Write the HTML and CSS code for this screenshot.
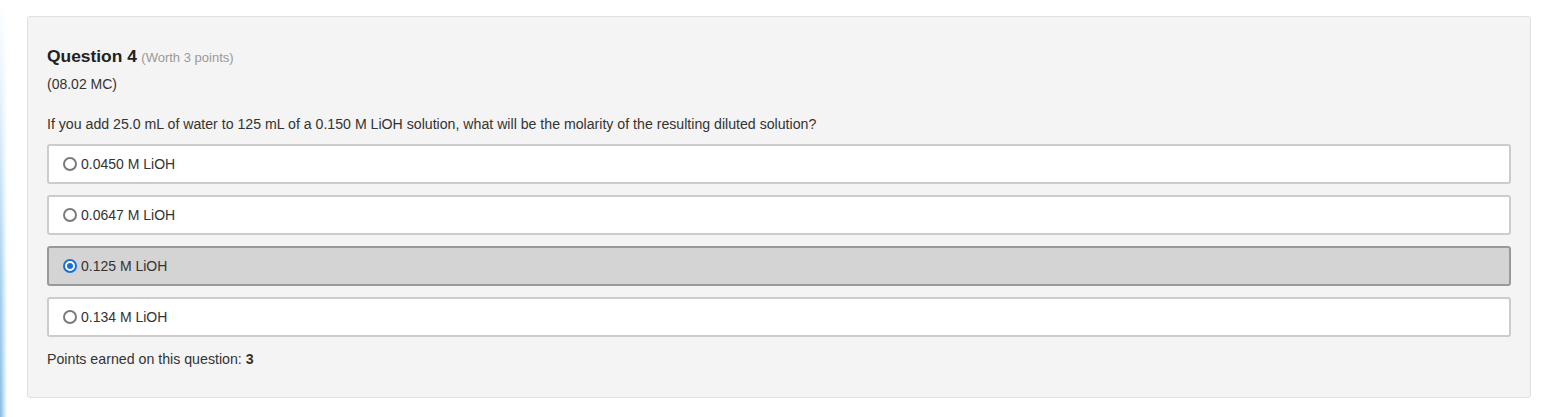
FILE: index.html
```html
<!DOCTYPE html>
<html>
<head>
<meta charset="utf-8">
<link rel="stylesheet" href="styles.css">
</head>
<body>
<div class="page">
  <div class="strip"></div>
  <div class="panel">
    <div class="title"><span class="qnum">Question 4</span> <span class="worth">(Worth 3 points)</span></div>
    <div class="code">(08.02 MC)</div>
    <div class="prompt">If you add 25.0 mL of water to 125 mL of a 0.150 M LiOH solution, what will be the molarity of the resulting diluted solution?</div>
    <div class="options">
      <div class="option"><span class="radio"></span><span class="label">0.0450 M LiOH</span></div>
      <div class="option"><span class="radio"></span><span class="label">0.0647 M LiOH</span></div>
      <div class="option selected"><span class="radio checked"></span><span class="label">0.125 M LiOH</span></div>
      <div class="option"><span class="radio"></span><span class="label">0.134 M LiOH</span></div>
    </div>
    <div class="points">Points earned on this question: <b>3</b></div>
  </div>
</div>
</body>
</html>
```
FILE: styles.css
```css
html, body {
  margin: 0;
  padding: 0;
  background: #ffffff;
}
body {
  font-family: "Liberation Sans", Arial, sans-serif;
  color: #333333;
  width: 1544px;
  height: 417px;
  overflow: hidden;
}
.page {
  position: relative;
  height: 417px;
  padding: 16px 0 0 27px;
  box-sizing: border-box;
}
.strip {
  position: absolute;
  left: 0;
  top: 0;
  width: 7px;
  height: 417px;
  background: linear-gradient(to right, rgba(255,255,255,0) 0%, #ffffff 100%),
              linear-gradient(to bottom, #ffffff 0%, #d8ecfa 30%, #9ccbec 70%, #80b9e2 100%);
}
.panel {
  width: 1504px;
  height: 382px;
  box-sizing: border-box;
  background: #f4f4f4;
  border: 1px solid #e0e0e0;
  border-radius: 3px;
  padding: 28px 19px 0 19px;
}
.title {
  height: 22px;
  line-height: 22px;
}
.qnum {
  font-size: 17.4px;
  font-weight: bold;
  color: #222222;
}
.worth {
  font-size: 13px;
  color: #999999;
}
.code {
  margin-top: 8px;
  font-size: 14px;
  line-height: 18px;
}
.prompt {
  margin-top: 22px;
  font-size: 14.15px;
  line-height: 18px;
}
.options {
  margin-top: 11px;
  display: flex;
  flex-direction: column;
  gap: 11px;
}
.option {
  height: 40px;
  box-sizing: border-box;
  background: #ffffff;
  border: 2px solid #cccccc;
  border-radius: 3px;
  display: flex;
  align-items: center;
  padding-left: 14px;
  font-size: 14px;
}
.option.selected {
  background: #d4d4d4;
  border-color: #999999;
}
.radio {
  width: 14px;
  height: 14px;
  box-sizing: border-box;
  border: 2px solid #7a7a7a;
  border-radius: 50%;
  background: #ffffff;
  margin-right: 4px;
  position: relative;
  flex: none;
}
.radio.checked {
  border: 2px solid #1a6fd6;
}
.radio.checked::after {
  content: "";
  position: absolute;
  left: 2px;
  top: 2px;
  width: 6px;
  height: 6px;
  border-radius: 50%;
  background: #1a6fd6;
}
.label {
  color: #333333;
}
.points {
  margin-top: 13px;
  font-size: 14.2px;
  line-height: 18px;
}
```
